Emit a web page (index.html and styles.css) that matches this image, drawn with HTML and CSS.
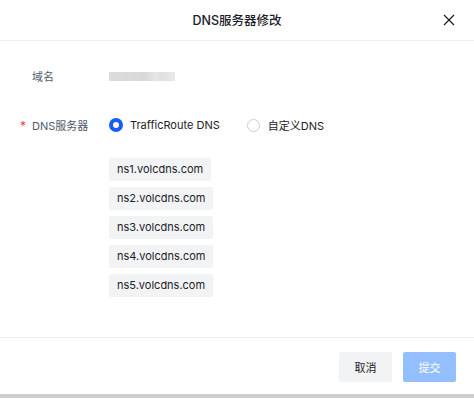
FILE: index.html
```html
<!DOCTYPE html>
<html lang="zh">
<head>
<meta charset="utf-8">
<link rel="stylesheet" href="styles.css">
</head>
<body>
<div class="modal">
  <div class="header">
    <div class="title">DNS服务器修改</div>
    <svg class="close" width="12" height="12" viewBox="0 0 12 12"><path d="M1 1L11 11M11 1L1 11" stroke="#1d2129" stroke-width="1.3" fill="none"/></svg>
  </div>
  <div class="body">
    <div class="row">
      <div class="label"><span class="star"></span>域名</div>
      <div class="value"><span class="blur"></span></div>
    </div>
    <div class="row row2">
      <div class="label"><span class="star">*</span>DNS服务器</div>
      <div class="value radios">
        <label class="radio"><span class="dot on"></span>TrafficRoute DNS</label>
        <label class="radio"><span class="dot"></span>自定义DNS</label>
      </div>
    </div>
    <div class="tags">
      <span class="tag">ns1.volcdns.com</span>
      <span class="tag">ns2.volcdns.com</span>
      <span class="tag">ns3.volcdns.com</span>
      <span class="tag">ns4.volcdns.com</span>
      <span class="tag">ns5.volcdns.com</span>
    </div>
  </div>
  <div class="footer">
    <button class="btn cancel">取消</button>
    <button class="btn submit">提交</button>
  </div>
  <div class="strip"></div>
</div>
</body>
</html>
```

FILE: styles.css
```css
* { box-sizing: border-box; }
html, body { margin: 0; padding: 0; background: #fff; }
body {
  font-family: "Inter", "Noto Sans CJK SC", sans-serif;
  color: #1d2129;
  width: 474px;
  height: 398px;
  overflow: hidden;
}
.modal {
  height: 398px;
  display: flex;
  flex-direction: column;
}
.header {
  height: 41px;
  border-bottom: 1px solid #eeeff1;
  display: flex;
  align-items: center;
  justify-content: center;
  position: relative;
}
.title {
  font-size: 12.5px;
  font-weight: 500;
  color: #1d2129;
  padding-bottom: 1px;
}
.close {
  position: absolute;
  right: 19px;
  top: 14px;
}
.body {
  flex: 1;
  padding: 24px 0 0 20px;
}
.row {
  display: flex;
  align-items: center;
  height: 22px;
}
.row2 { margin-top: 27px; }
.label {
  width: 89px;
  font-size: 11px;
  color: #4e5969;
  display: flex;
  align-items: center;
}
.star {
  width: 12px;
  color: #f53f3f;
  font-size: 12px;
}
.blur {
  display: block;
  width: 66px;
  height: 9px;
  background: linear-gradient(90deg, #dcdcdc 0%, #d8d8d8 55%, #e6e6e6 70%, #e0e0e0 80%, #e9e9e9 100%);
  filter: blur(0.6px);
}
.radios {
  display: flex;
  gap: 27px;
}
.radio {
  display: flex;
  align-items: center;
  font-size: 11px;
  color: #1d2129;
}
.dot {
  width: 13px;
  height: 13px;
  border-radius: 50%;
  border: 1px solid #c9cdd4;
  margin-right: 8px;
  background: #fff;
}
.dot.on {
  width: 14px;
  height: 14px;
  border: 4px solid #165dff;
  margin-right: 7px;
}
.tags {
  margin: 22px 0 0 89px;
  display: flex;
  flex-direction: column;
  align-items: flex-start;
  gap: 6px;
}
.tag {
  height: 23px;
  line-height: 23px;
  padding: 0 8px;
  background: #f2f3f5;
  font-size: 11px;
  color: #1d2129;
  border-radius: 2px;
}
.footer {
  height: 57px;
  border-top: 1px solid #eeeff1;
  display: flex;
  justify-content: flex-end;
  align-items: flex-start;
  padding: 14px 18px 0 0;
  gap: 11px;
}
.btn {
  width: 53px;
  height: 30px;
  border: none;
  border-radius: 2px;
  font-family: inherit;
  font-size: 11px;
  padding: 0;
}
.cancel { background: #f2f3f5; color: #1d2129; }
.submit { background: #94bffe; color: #fff; }
.strip {
  height: 4px;
  background: #cfcfcf;
}
```
